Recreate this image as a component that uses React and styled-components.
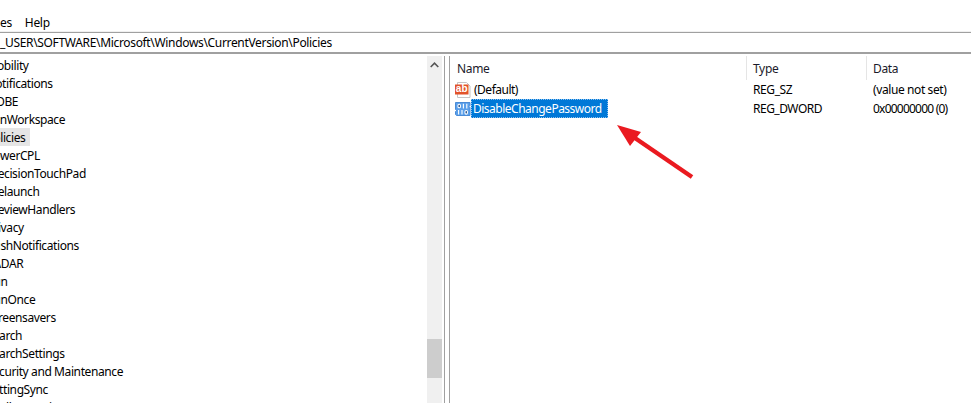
import React from "react";
import styled, { createGlobalStyle } from "styled-components";

const Global = createGlobalStyle`
  html, body { margin: 0; padding: 0; background: #fff; }
  body { font-family: "Noto Sans", "Liberation Sans", sans-serif; font-size: 12px; color: #000; letter-spacing: -0.33px; }
`;
const Window = styled.div`
  position: relative; width: 971px; height: 403px; overflow: hidden; background: #fff;
  display: flex; flex-direction: column;
`;
const MenuBar = styled.div`
  height: 32px; box-sizing: border-box; padding-top: 14px; display: flex; gap: 13px;
  line-height: 18px; white-space: nowrap;
`;
const Address = styled.div`
  height: 22px; box-sizing: border-box; padding-top: 1px;
  border-top: 1px solid #a0a0a0; box-shadow: 0 -1px 0 #f0f0f0;
  border-bottom: 2px solid #a0a0a0; line-height: 18px; white-space: nowrap;
  margin-bottom: 2px;
`;
const Panes = styled.div`flex: 1; min-height: 0; display: flex;`;
const TreePane = styled.div`
  width: 427px; overflow: hidden; flex: none;
`;
const TreeRow = styled.div`
  height: 18px; line-height: 20px; white-space: nowrap; width: ${p => (p.$selected ? "30px" : "auto")};
  background: ${p => (p.$selected ? "#e5e5e5" : "transparent")};
  text-indent: -13.5px; letter-spacing: -0.4px;
`;
const Scrollbar = styled.div`
  width: 15px; flex: none; background: #f0f0f0; display: flex; flex-direction: column; align-items: center;
`;
const ScrollUp = styled.svg`width: 9px; height: 6px; margin-top: 6px; flex: none;`;
const ScrollThumb = styled.div`
  width: 15px; height: 39px; margin-top: 271px; background: #cdcdcd; flex: none;
`;
const Splitter = styled.div`
  width: 4px; flex: none; margin-left: 2px;
  border-left: 1px solid #a0a0a0; border-right: 1px solid #a0a0a0;
`;
const ListPane = styled.div`flex: 1; min-width: 0; display: flex; flex-direction: column;`;
const Columns = styled.div`
  display: grid; grid-template-columns: 297px 120px 1fr; 
`;
const Head = styled.div`
  height: 24px; line-height: 26px; box-sizing: border-box; padding-left: ${p => p.$pad}px; color: #1a1a2a;
  border-right: ${p => (p.$last ? "none" : "1px solid #e5e5e5")};
`;
const Cell = styled.div`
  height: 19px; line-height: 19px; padding-left: 6px; white-space: nowrap;
  letter-spacing: ${p => p.$spacing ?? -0.4}px;
`;
const NameCell = styled.div`
  height: 19px; display: flex; align-items: center; padding-left: 5px;
`;
const ValueIcon = styled.svg`width: 16px; height: 16px; flex: none; margin-right: ${p => p.$gap}px;`;
const NameText = styled.span`
  line-height: 19px; height: 19px; padding: 0 6px 0 2px; letter-spacing: -0.5px;
  ${p => p.$selected && `
    background: #0078d7; color: #fff; outline: 1px dotted #8cc0ee; outline-offset: -1px;
    width: 137px; box-sizing: border-box;
  `}
`;
const Arrow = styled.svg`
  position: absolute; left: 0; top: 0; width: 971px; height: 403px; pointer-events: none;
`;

const rows = ["Mobility","Notifications","OOBE","PenWorkspace","Policies","PowerCPL","PrecisionTouchPad","Prelaunch","PreviewHandlers","Privacy","PushNotifications","RADAR","Run","RunOnce","Screensavers","Search","SearchSettings","Security and Maintenance","SettingSync","Shell Extensions"];

const AbIcon = () => (
  <ValueIcon viewBox="0 0 16 16" $gap={1}>
    <path d="M2.5 .5h9l3.5 3.5v11.5h-12.5z" fill="#fff" stroke="#c4c4c4" />
    <rect x="0" y="2.5" width="13.5" height="10" fill="#e2532a" />
    <text x="6.7" y="10.4" textAnchor="middle" fontSize="10" fontWeight="700" fontFamily="Liberation Sans" letterSpacing="0" fill="#fff">ab</text>
  </ValueIcon>
);
const BinIcon = () => (
  <ValueIcon viewBox="0 0 16 16" $gap={0}>
    <path d="M.5 1.5h14.5v3l-1 1 1 1v8H1.5l-1-1v-3l1-1-1-1z" fill="#5a9fea" stroke="#4a8bd6" />
    <g fill="#123f7a" stroke="#fff" strokeWidth="1.1">
      <rect x="3" y="3.2" width="2.4" height="3.6" rx="1" />
      <path d="M8.4 2.8v4.6M11.8 2.8v4.6" />
      <path d="M3.6 9v4.6M7 9v4.6" />
      <rect x="10" y="9.5" width="2.4" height="3.6" rx="1" />
    </g>
  </ValueIcon>
);

export default function App() {
  return (
    <Window>
      <Global />
      <MenuBar><span>es</span><span>Help</span></MenuBar>
      <Address>_USER\SOFTWARE\Microsoft\Windows\CurrentVersion\Policies</Address>
      <Panes>
        <TreePane>
          {rows.map(r => <TreeRow key={r} $selected={r === "Policies"}>{r}</TreeRow>)}
        </TreePane>
        <Scrollbar>
          <ScrollUp viewBox="0 0 9 6"><path d="M.7 5 4.5 1.2 8.3 5" fill="none" stroke="#555" strokeWidth="1.6" /></ScrollUp>
          <ScrollThumb />
        </Scrollbar>
        <Splitter />
        <ListPane>
          <Columns>
            <Head $pad={7}>Name</Head>
            <Head $pad={6}>Type</Head>
            <Head $pad={6} $last>Data</Head>
            <NameCell><AbIcon /><NameText>(Default)</NameText></NameCell>
            <Cell>REG_SZ</Cell>
            <Cell>(value not set)</Cell>
            <NameCell><BinIcon /><NameText $selected>DisableChangePassword</NameText></NameCell>
            <Cell $spacing={-0.5}>REG_DWORD</Cell>
            <Cell $spacing={-0.78}>0x00000000 (0)</Cell>
          </Columns>
        </ListPane>
      </Panes>
      <Arrow viewBox="0 0 971 403">
        <path d="M692 177 632 136" stroke="#ea1a20" strokeWidth="4.4" fill="none" />
        <path d="M617 125 641 132 630 146z" fill="#ea1a20" />
      </Arrow>
    </Window>
  );
}
